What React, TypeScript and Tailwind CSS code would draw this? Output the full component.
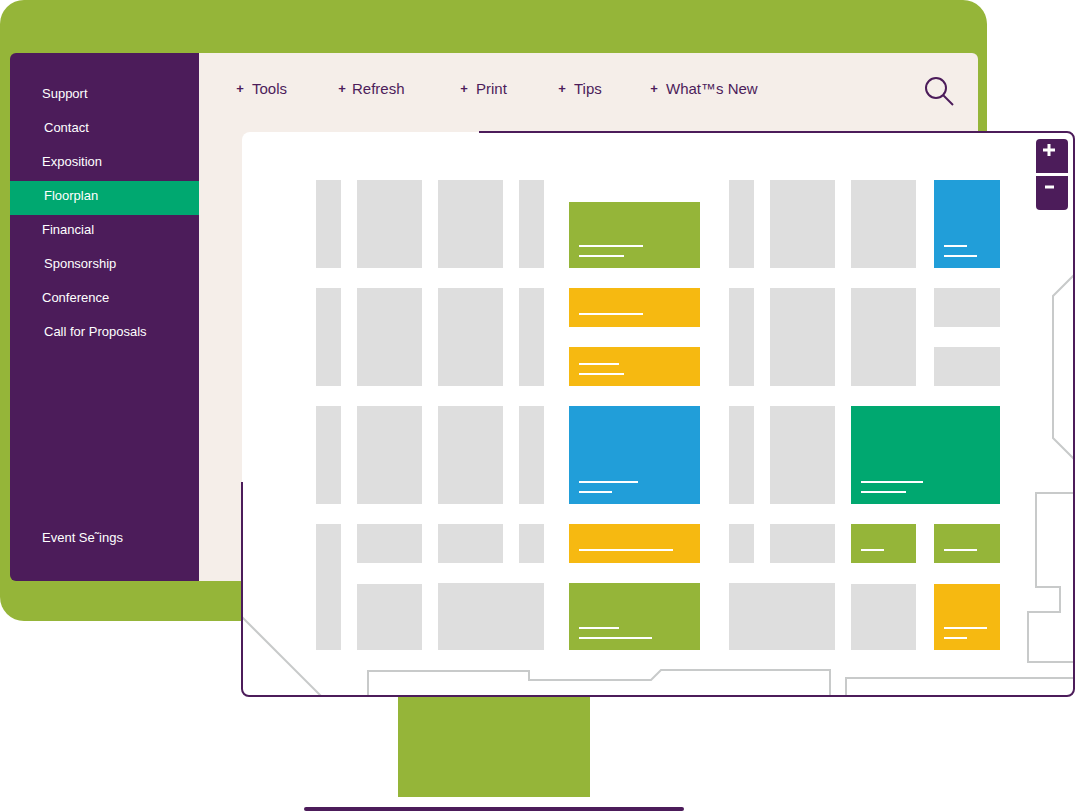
import React from 'react'

interface BoothProps {
  place: string
  color?: string
  lines?: string[]
}

const sideLinks = [
  { name: 'Support', pad: 'pl-8' },
  { name: 'Contact', pad: 'pl-[34px]' },
  { name: 'Exposition', pad: 'pl-8' },
  { name: 'Floorplan', pad: 'pl-[34px]', active: true },
  { name: 'Financial', pad: 'pl-8' },
  { name: 'Sponsorship', pad: 'pl-[34px]' },
  { name: 'Conference', pad: 'pl-8' },
  { name: 'Call for Proposals', pad: 'pl-[34px]' },
]

const menu = [
  { name: 'Tools', width: 'w-[102px]', gap: 'gap-2' },
  { name: 'Refresh', width: 'w-[122px]', gap: 'gap-1.5' },
  { name: 'Print', width: 'w-[98px]', gap: 'gap-2' },
  { name: 'Tips', width: 'w-[92px]', gap: 'gap-2' },
  { name: 'What™s New', width: 'w-[120px]', gap: 'gap-2' },
]

const green = 'bg-[#95b539]'
const yellow = 'bg-[#f6b911]'
const blue = 'bg-[#219ed9]'
const teal = 'bg-[#00a870]'

const booths: BoothProps[] = [
  // row 1
  { place: 'col-start-1 row-start-1' },
  { place: 'col-start-2 row-start-1' },
  { place: 'col-start-3 row-start-1' },
  { place: 'col-start-4 row-start-1' },
  { place: 'col-start-5 row-start-1 mt-[22px] ml-[9px] mr-[13px]', color: green, lines: ['w-16', 'w-[45px]'] },
  { place: 'col-start-6 row-start-1' },
  { place: 'col-start-7 row-start-1' },
  { place: 'col-start-8 row-start-1' },
  { place: 'col-start-9 row-start-1 ml-0.5', color: blue, lines: ['w-[23px]', 'w-[33px]'] },
  // rows 2 and 3
  { place: 'col-start-1 row-start-2 row-span-2' },
  { place: 'col-start-2 row-start-2 row-span-2' },
  { place: 'col-start-3 row-start-2 row-span-2' },
  { place: 'col-start-4 row-start-2 row-span-2' },
  { place: 'col-start-5 row-start-2 ml-[9px] mr-[13px]', color: yellow, lines: ['w-16'] },
  { place: 'col-start-5 row-start-3 ml-[9px] mr-[13px]', color: yellow, lines: ['w-10', 'w-[45px]'] },
  { place: 'col-start-6 row-start-2 row-span-2' },
  { place: 'col-start-7 row-start-2 row-span-2' },
  { place: 'col-start-8 row-start-2 row-span-2' },
  { place: 'col-start-9 row-start-2 ml-0.5' },
  { place: 'col-start-9 row-start-3 ml-0.5' },
  // row 4
  { place: 'col-start-1 row-start-4' },
  { place: 'col-start-2 row-start-4' },
  { place: 'col-start-3 row-start-4' },
  { place: 'col-start-4 row-start-4' },
  { place: 'col-start-5 row-start-4 ml-[9px] mr-[13px]', color: blue, lines: ['w-[59px]', 'w-[33px]'] },
  { place: 'col-start-6 row-start-4' },
  { place: 'col-start-7 row-start-4' },
  { place: 'col-start-8 row-start-4 col-span-2', color: teal, lines: ['w-[62px]', 'w-[45px]'] },
  // rows 5 and 6
  { place: 'col-start-1 row-start-5 row-span-2' },
  { place: 'col-start-2 row-start-5' },
  { place: 'col-start-3 row-start-5' },
  { place: 'col-start-4 row-start-5' },
  { place: 'col-start-5 row-start-5 ml-[9px] mr-[13px]', color: yellow, lines: ['w-[94px]'] },
  { place: 'col-start-6 row-start-5' },
  { place: 'col-start-7 row-start-5' },
  { place: 'col-start-8 row-start-5', color: green, lines: ['w-[23px]'] },
  { place: 'col-start-9 row-start-5 ml-0.5', color: green, lines: ['w-[33px]'] },
  { place: 'col-start-2 row-start-6 mt-px' },
  { place: 'col-start-3 row-start-6 col-span-2' },
  { place: 'col-start-5 row-start-6 ml-[9px] mr-[13px]', color: green, lines: ['w-10', 'w-[73px]'] },
  { place: 'col-start-6 row-start-6 col-span-2' },
  { place: 'col-start-8 row-start-6 mt-px' },
  { place: 'col-start-9 row-start-6 mt-px ml-0.5', color: yellow, lines: ['w-[43px]', 'w-[23px]'] },
]

const Booth: React.FC<BoothProps> = ({ place, color = 'bg-[#dedede]', lines = [] }) => {
  return (
    <div className={`${place} ${color} flex flex-col justify-end gap-2 pl-2.5 ${lines.length > 1 ? 'pb-[11px]' : 'pb-3'}`}>
      {lines.map((width, i) => (
        <span key={i} className={`${width} h-0.5 bg-white`} />
      ))}
    </div>
  )
}

const Sidebar: React.FC = () => {
  return (
    <nav className="w-[189px] shrink-0 flex flex-col bg-[#4c1c5a] pt-[26px] pb-6 text-[13px] leading-5 text-white">
      {sideLinks.map((link) => (
        <a
          key={link.name}
          href="#"
          className={`h-[34px] flex items-center pb-1 ${link.pad} ${link.active ? 'bg-[#00a870]' : ''}`}
        >
          {link.name}
        </a>
      ))}
      <a href="#" className="mt-auto h-[34px] flex items-center pl-8 pb-1">
        Event Se˜ings
      </a>
    </nav>
  )
}

const TopBar: React.FC = () => {
  return (
    <header className="flex-1 flex items-start justify-between bg-[#f5eee9] pl-[37px] pr-[23px] pt-[22px]">
      <div className="flex pt-1 text-[15px] leading-5 text-[#4c1c5a]">
        {menu.map((item) => (
          <button key={item.name} type="button" className={`${item.width} ${item.gap} flex items-center whitespace-nowrap`}>
            <span className="w-2 text-[13px] leading-5 font-bold">+</span>
            {item.name}
          </button>
        ))}
      </div>
      <button type="button" aria-label="Search">
        <svg className="w-8 h-8" viewBox="0 0 32 32" fill="none" stroke="#4c1c5a" strokeWidth="2">
          <circle cx="13" cy="13" r="10" />
          <path d="M20 20L30 30" />
        </svg>
      </button>
    </header>
  )
}

const Floorplan: React.FC = () => {
  return (
    <main className="relative bg-white rounded-lg pt-12 pb-[46px] pl-[74px] pr-[74px]">
      <svg
        className="absolute inset-0 w-full h-full"
        viewBox="0 0 832 564"
        preserveAspectRatio="none"
        fill="none"
        stroke="#c8caca"
        strokeWidth="2"
      >
        <path d="M0 485L80 565" />
        <path d="M126 565V539H287V548H409L419 538H588V565" />
        <path d="M604 565V546H832" />
        <path d="M832 361H794V455H818V480H786V530H832" />
        <path d="M832 143L811 164V306L832 327" />
      </svg>

      <div className="relative grid gap-x-4 gap-y-5 grid-cols-[25fr_65fr_65fr_25fr_153fr_25fr_65fr_65fr_68fr] grid-rows-[88px_39px_39px_98px_39px_67px]">
        {booths.map((booth) => (
          <Booth key={booth.place} {...booth} />
        ))}
      </div>

      {/* outline starts part way along the top and left edges */}
      <div className="absolute -inset-px rounded-lg border-2 border-[#4c1c5a] pointer-events-none [clip-path:polygon(238px_0,100%_0,100%_100%,0_100%,0_351px,238px_351px)]" />

      <div className="absolute top-[7px] right-1.5 flex flex-col gap-[3px]">
        <button type="button" aria-label="Zoom in" className="w-8 h-[34px] rounded-t bg-[#4c1c5a]">
          <svg className="w-8 h-[34px]" viewBox="0 0 32 34" stroke="#fff" strokeWidth="3">
            <path d="M7 11H19M13 5V17" />
          </svg>
        </button>
        <button type="button" aria-label="Zoom out" className="w-8 h-[34px] rounded-b bg-[#4c1c5a]">
          <svg className="w-8 h-[34px]" viewBox="0 0 32 34" stroke="#fff" strokeWidth="3">
            <path d="M9 11H18" />
          </svg>
        </button>
      </div>
    </main>
  )
}

const App: React.FC = () => {
  return (
    <div className="w-full bg-white font-['Liberation_Sans',Arial,sans-serif] overflow-hidden">
      <div className="grid">
        <div className="col-start-1 row-start-1 mr-[89px] mb-[76px] flex rounded-3xl bg-[#95b539] pt-[53px] pb-10 pl-2.5 pr-[9px]">
          <div className="flex-1 flex rounded-md overflow-hidden">
            <Sidebar />
            <TopBar />
          </div>
        </div>
        <div className="col-start-1 row-start-1 mt-[132px] mb-px ml-[242px] mr-0.5">
          <Floorplan />
        </div>
      </div>
      <div className="mr-[89px] flex flex-col items-center gap-2.5">
        <div className="w-48 h-[100px] bg-[#95b539]" />
        <div className="w-[380px] h-1 rounded-full bg-[#4c1c5a]" />
      </div>
    </div>
  )
}

export default App
